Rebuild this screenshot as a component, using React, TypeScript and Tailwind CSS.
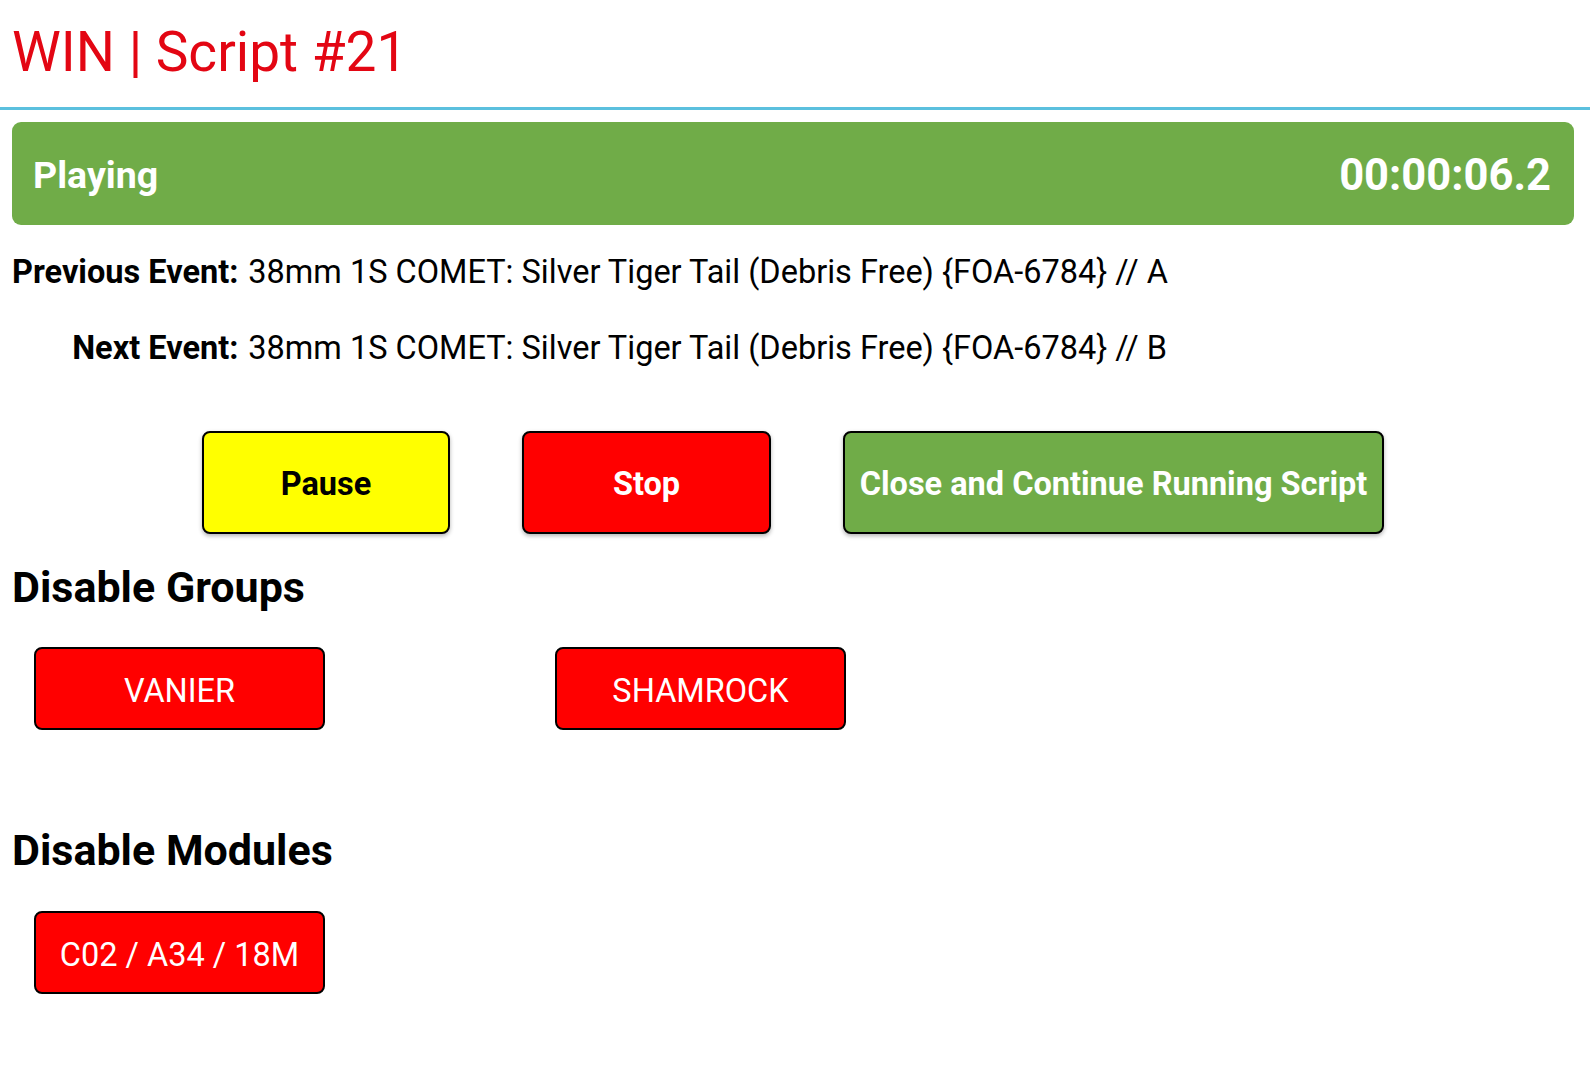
import React from "react";

const F = { fontFamily: "Roboto, 'Noto Sans', sans-serif" };

export default function App() {
  return (
    <div className="w-[1590px] h-[1066px] bg-white overflow-hidden" style={F}>
      <div className="h-[110px] border-b-[3px] border-[#5bc0de] px-[12px] flex items-center">
        <h1 className="text-[55px] leading-none text-[#e30613] pb-[2px]">WIN | Script #21</h1>
      </div>
      <div className="pl-[12px] pr-[16px] pt-[12px]">
        <div className="h-[103px] rounded-[9px] bg-[#70ac48] flex items-center justify-between pl-[21px] pr-[23px] pt-[4px] text-white font-bold">
          <span className="text-[37.5px]">Playing</span>
          <span className="text-[43.5px]">00:00:06.2</span>
        </div>
        <div className="grid grid-cols-[auto_1fr] gap-x-[10px] gap-y-[36px] mt-[27px] text-[32.5px] leading-[40px] text-black">
          <span className="font-bold text-right">Previous Event:</span>
          <span>38mm 1S COMET: Silver Tiger Tail (Debris Free) {"{FOA-6784}"} // A</span>
          <span className="font-bold text-right">Next Event:</span>
          <span>38mm 1S COMET: Silver Tiger Tail (Debris Free) {"{FOA-6784}"} // B</span>
        </div>
        <div className="flex justify-center gap-[72px] mt-[63px]">
          <button className="w-[248px] h-[103px] rounded-[8px] border-2 border-black bg-[#ffff00] text-black font-bold text-[32.5px] pt-[3px] shadow-[0_2px_4px_rgba(0,0,0,0.3)]">Pause</button>
          <button className="w-[249px] h-[103px] rounded-[8px] border-2 border-black bg-[#ff0000] text-white font-bold text-[32.5px] pt-[3px] shadow-[0_2px_4px_rgba(0,0,0,0.3)]">Stop</button>
          <button className="w-[541px] h-[103px] rounded-[8px] border-2 border-black bg-[#70ac48] text-white font-bold text-[32.5px] pt-[3px] shadow-[0_2px_4px_rgba(0,0,0,0.3)]">Close and Continue Running Script</button>
        </div>
        <h2 className="text-[43px] font-bold text-black leading-none mt-[32px]">Disable Groups</h2>
        <div className="grid grid-cols-3 w-[1563px] mt-[38px]">
          <div className="pl-[22px]">
            <button className="w-[291px] h-[83px] rounded-[8px] border-2 border-black bg-[#ff0000] text-white text-[32.5px] pt-[5px]">VANIER</button>
          </div>
          <div className="pl-[22px]">
            <button className="w-[291px] h-[83px] rounded-[8px] border-2 border-black bg-[#ff0000] text-white text-[32.5px] pt-[5px]">SHAMROCK</button>
          </div>
        </div>
        <h2 className="text-[43px] font-bold text-black leading-none mt-[99px]">Disable Modules</h2>
        <div className="grid grid-cols-3 w-[1563px] mt-[39px]">
          <div className="pl-[22px]">
            <button className="w-[291px] h-[83px] rounded-[8px] border-2 border-black bg-[#ff0000] text-white text-[32.5px] pt-[5px]">C02 / A34 / 18M</button>
          </div>
        </div>
      </div>
    </div>
  );
}
